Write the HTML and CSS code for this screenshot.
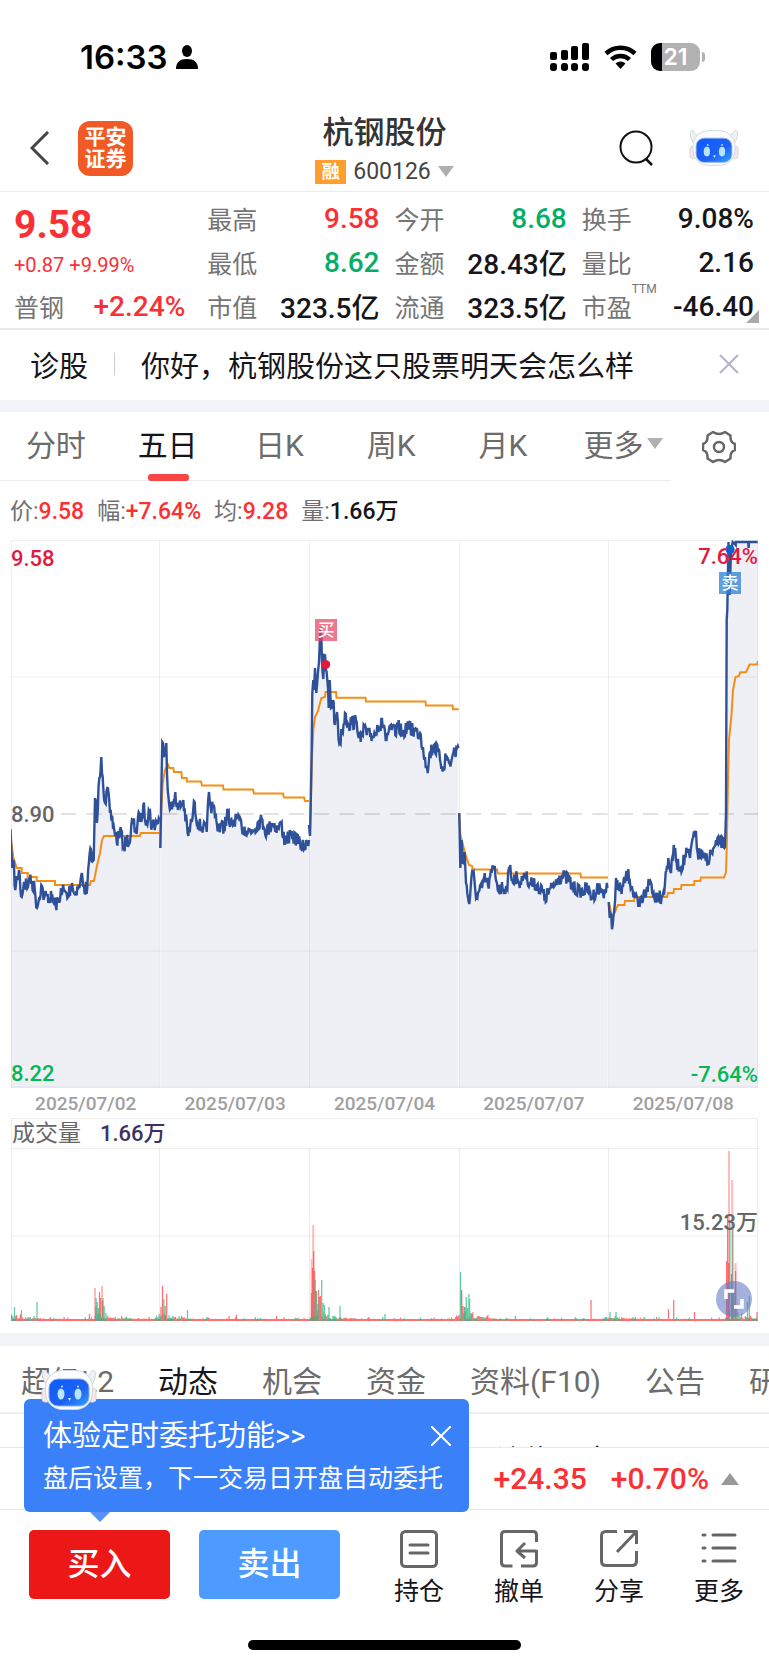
FILE: index.html
```html
<!DOCTYPE html>
<html lang="zh-CN">
<head>
<meta charset="utf-8">
<meta name="viewport" content="width=device-width, initial-scale=1">
<title>杭钢股份 600126</title>
<link rel="stylesheet" href="styles.css">
</head>
<body>
<svg class="defs" aria-hidden="true">
  <defs>
    <linearGradient id="face" x1="0" y1="0" x2="1" y2="1">
      <stop offset="0" stop-color="#0a5bff"/><stop offset=".6" stop-color="#1f62f2"/><stop offset="1" stop-color="#2fa4ff"/>
    </linearGradient>
    <symbol id="robot" viewBox="0 0 56 42">
      <path d="M7 18C2 12 0 4 3 1.500q2-1 3 2 2 4 9 4zM49 18c5-6 7-14 4-16.500q-2-1-3 2-2 4-9 4z" fill="#eef1f6" stroke="#cfd4dc"/>
      <rect x="1" y="19" width="8" height="14" rx="3" fill="#f7e6e4" stroke="#d4d6de"/>
      <rect x="47" y="19" width="8" height="14" rx="3" fill="#f7e6e4" stroke="#d4d6de"/>
      <rect x="4.500" y="1.500" width="47" height="39" rx="17" fill="#fbfcfe" stroke="#d2d6de"/>
      <rect x="8" y="10" width="40" height="27" rx="9" fill="url(#face)" stroke="#8fabe2"/>
      <ellipse cx="20" cy="25" rx="3.500" ry="5.500" fill="#b9e4ff"/><ellipse cx="37" cy="25" rx="3.500" ry="5.500" fill="#b9e4ff"/>
      <circle cx="21" cy="17.500" r="1" fill="#b9e4ff"/><circle cx="37" cy="17.500" r="1" fill="#b9e4ff"/>
      <path d="M27 29h3l-1.500 3z" fill="#d5efff"/>
    </symbol>
  </defs>
</svg>

<div class="status">
  <div class="status-left">
    <span>16:33</span>
    <svg width="22" height="25" viewBox="0 0 22 25"><ellipse cx="11" cy="6" rx="5" ry="6"/><path d="M0 24c0-7 4-10 11-10s11 3 11 10z"/></svg>
  </div>
  <div class="status-right">
    <svg width="40" height="28" viewBox="0 0 40 28">
      <rect x="0" y="9" width="7" height="8" rx="2"/><rect x="11" y="7" width="7" height="10" rx="2"/><rect x="21" y="3" width="7" height="14" rx="2"/><rect x="32" y="0" width="7" height="17" rx="2"/>
      <rect x="0" y="20" width="7" height="8" rx="3"/><rect x="11" y="20" width="7" height="8" rx="3"/><rect x="21" y="20" width="7" height="8" rx="3"/><rect x="32" y="20" width="7" height="8" rx="3"/>
    </svg>
    <svg width="33" height="26" viewBox="0 0 33 26">
      <path d="M2 9.500a21 21 0 0 1 29 0M7.500 15.500a13 13 0 0 1 18 0" fill="none" stroke="#000" stroke-width="4.500"/>
      <path d="M16.500 25l-5-5.500a7.500 7.500 0 0 1 10 0z"/>
    </svg>
    <div class="battery"><span>21</span></div>
  </div>
</div>

<header class="header">
  <div class="header-side">
    <button class="plain" aria-label="返回"><svg width="20" height="34" viewBox="0 0 20 34"><path d="M18 1L2 17l16 16" fill="none" stroke="#444" stroke-width="3"/></svg></button>
    <div class="logo"><span>平安</span><span>证券</span></div>
  </div>
  <div class="title">
    <h1>杭钢股份</h1>
    <button class="plain code"><span class="tag">融</span><span>600126</span><i class="tri-down"></i></button>
  </div>
  <div class="header-side end">
    <button class="plain" aria-label="搜索"><svg width="36" height="36" viewBox="0 0 36 36"><circle cx="17" cy="17" r="15.500" fill="none" stroke="#111" stroke-width="2"/><path d="M27 29l6 6" stroke="#111" stroke-width="2.500"/></svg></button>
    <button class="plain" aria-label="助手"><svg width="50" height="40"><use href="#robot"/></svg></button>
  </div>
</header>

<section class="quote">
  <div class="stat lead"><strong class="up big">9.58</strong></div>
  <div class="stat"><span>最高</span><b class="up">9.58</b></div>
  <div class="stat"><span>今开</span><b class="down">8.68</b></div>
  <div class="stat"><span>换手</span><b>9.08%</b></div>
  <div class="stat lead up small">+0.87 +9.99%</div>
  <div class="stat"><span>最低</span><b class="down">8.62</b></div>
  <div class="stat"><span>金额</span><b>28.43亿</b></div>
  <div class="stat"><span>量比</span><b>2.16</b></div>
  <div class="stat lead"><span>普钢</span><b class="up">+2.24%</b></div>
  <div class="stat"><span>市值</span><b>323.5亿</b></div>
  <div class="stat"><span>流通</span><b>323.5亿</b></div>
  <div class="stat"><span>市盈<sup>TTM</sup></span><b>-46.40</b></div>
  <i class="corner"></i>
</section>

<section class="ask">
  <span>诊股</span><i class="bar"></i><a href="#ask">你好，杭钢股份这只股票明天会怎么样</a>
  <button class="plain" aria-label="关闭"><svg width="20" height="20" viewBox="0 0 20 20"><path d="M1 1l18 18M19 1L1 19" stroke="#b4b4c6" stroke-width="2"/></svg></button>
</section>

<nav class="periods">
  <div class="period-list">
    <button class="plain">分时</button>
    <button class="plain active">五日</button>
    <button class="plain">日K</button>
    <button class="plain">周K</button>
    <button class="plain">月K</button>
    <button class="plain more">更多<i class="tri-down"></i></button>
  </div>
  <button class="plain gear" aria-label="设置"><svg width="34" height="34" viewBox="0 0 34 34" fill="none" stroke="#666" stroke-width="2.500" stroke-linejoin="round"><path d="M11 2q6 4 12 0l5.500 3.500q-.5 7 4.500 8.500v6q-5 1.500-4.500 8.500L23 32q-6-4-12 0l-5.500-3.500Q6 21.500 1 20v-6q5-1.500 4.500-8.500z"/><circle cx="17" cy="17" r="5"/></svg></button>
</nav>

<div class="readout">
  <span>价:<b class="up">9.58</b></span><span>幅:<b class="up">+7.64%</b></span><span>均:<b class="up">9.28</b></span><span>量:<b>1.66万</b></span>
</div>

<section class="chart">
  <div class="price">
    <svg id="price" viewBox="11 540 747 548" preserveAspectRatio="none">
      <path id="area" fill="#eef0f6"/>
      <path d="M11 540.500H758M11 677H758M11 951H758M11 1087H758M11.500 540V1088M159.500 540V1088M309.500 540V1088M459.500 540V1088M608.500 540V1088M757.500 540V1088" stroke="#000" stroke-opacity=".06" fill="none"/>
      <path d="M61 814H758" stroke="#000" stroke-opacity=".11" stroke-width="2" stroke-dasharray="15.300 10" fill="none"/>
      <path id="avg" fill="none" stroke="#f68d14" stroke-width="2"/>
      <path id="line" fill="none" stroke="#2f5199" stroke-width="2.400"/>
      <circle cx="325.700" cy="664.500" r="4.500" fill="#e3183e"/>
      <circle cx="730" cy="549.500" r="4.500" fill="#0a62d0"/>
    </svg>
    <span class="lab top-left">9.58</span>
    <span class="lab mid-left">8.90</span>
    <span class="lab bottom-left">8.22</span>
    <span class="lab top-right">7.64%</span>
    <span class="lab bottom-right">-7.64%</span>
    <span class="mark buy-mark">买</span>
    <span class="mark sell-mark">卖</span>
  </div>
  <div class="dates"><span>2025/07/02</span><span>2025/07/03</span><span>2025/07/04</span><span>2025/07/07</span><span>2025/07/08</span></div>
  <div class="vol-head"><span>成交量</span><b>1.66万</b></div>
  <div class="volume">
    <svg viewBox="11 1148 747 173" preserveAspectRatio="none">
      <path d="M11 1148.500H758M11 1236H758M11.500 1148V1321M159.500 1148V1321M309.500 1148V1321M459.500 1148V1321M608.500 1148V1321M757.500 1148V1321" stroke="#000" stroke-opacity=".07" fill="none"/>
      <path id="bars-up" fill="none" stroke="#ff4d50" stroke-opacity=".8" stroke-width="1.250"/>
      <path id="bars-down" fill="none" stroke="#2fb884" stroke-opacity=".75" stroke-width="1.250"/>
      <path id="bars-tall" fill="none" stroke="#ff4d50" stroke-opacity=".38" stroke-width="2"/>
    </svg>
    <span class="lab vol-lab">15.23万</span>
    <button class="expand" aria-label="全屏"><svg width="20" height="20" viewBox="0 0 20 20"><path d="M2 10V2h8M18 10v8h-8" fill="none" stroke="#fff" stroke-width="3.500"/></svg></button>
  </div>
</section>

<nav class="tabs">
  <a href="#l2">超级L2</a><a href="#news" class="active">动态</a><a href="#chance">机会</a><a href="#fund">资金</a><a href="#f10">资料(F10)</a><a href="#notice">公告</a><a href="#report">研报</a>
</nav>
<div class="news"><p>国&nbsp; 涨价&nbsp;百次</p></div>

<div class="bottom">
  <div class="index up"><span>3497.48</span><span>+24.35</span><span>+0.70%</span><i class="tri-up"></i></div>
  <div class="actions">
    <button class="trade buy">买入</button>
    <button class="trade sell">卖出</button>
    <div class="tools">
      <button class="plain tool"><svg width="38" height="38" viewBox="0 0 38 38"><rect x="1.500" y="1.500" width="35" height="35" rx="4"/><path d="M10 15h18M10 23h18" stroke-linecap="round"/></svg>持仓</button>
      <button class="plain tool"><svg width="38" height="38" viewBox="0 0 38 38"><path d="M36.500 12V5q0-3.500-3.500-3.500H5Q1.500 1.500 1.500 5v27.500Q1.500 36 5 36h7.500M21 36h12q3.500 0 3.500-3.500V21H18M25 13l-8 8 8 7"/></svg>撤单</button>
      <button class="plain tool"><svg width="38" height="38" viewBox="0 0 38 38"><path d="M17 1.500H6Q1.500 1.500 1.500 6v25q0 4.500 4.500 4.500h26q4.500 0 4.500-4.500V21M24 1.500h12.500V14M36 2L17 22"/></svg>分享</button>
      <button class="plain tool"><svg width="38" height="38" viewBox="0 0 38 38"><path d="M13 5h22M13 18h22M13 31h22M3 5h2M3 18h2M3 31h2" stroke-linecap="round"/></svg>更多</button>
    </div>
  </div>
  <div class="home"></div>
  <aside class="tip">
    <svg class="tip-robot" width="56" height="42"><use href="#robot"/></svg>
    <div class="tip-row"><a href="#timed">体验定时委托功能&gt;&gt;</a>
      <button class="plain" aria-label="关闭提示"><svg width="20" height="20" viewBox="0 0 20 20"><path d="M0 0l20 20M20 0L0 20" stroke="#fff" stroke-width="2"/></svg></button></div>
    <p>盘后设置，下一交易日开盘自动委托</p>
  </aside>
</div>
<script src="chart.js"></script>
</body>
</html>
```
FILE: styles.css
```css
* { box-sizing: border-box; }
body {
  margin: 0;
  background: #fff;
  color: #16161a;
  font-family: Roboto, "Noto Sans CJK SC", sans-serif;
  font-size: 25px;
  display: flex;
  flex-direction: column;
  overflow-x: hidden;
}
h1, p { margin: 0; }
a { color: inherit; text-decoration: none; white-space: nowrap; }
b { font-weight: 500; }
svg { display: block; }
.defs { position: absolute; width: 0; height: 0; }
.plain {
  border: 0; padding: 0; background: none;
  font: inherit; color: inherit; white-space: nowrap;
}
.up { color: #fb3034; }
.down { color: #06ad66; }
.tri-down { border: 8px solid transparent; border-top: 11px solid #b0b0b0; border-bottom: 0; }
.tri-up { border: 9px solid transparent; border-bottom: 12px solid #999; border-top: 0; }

.status {
  height: 112px; padding: 2px 64px 0 80px;
  display: flex; justify-content: space-between; align-items: center;
}
.status-left {
  display: flex; align-items: center; gap: 8px;
  font: 600 33px/40px Inter, sans-serif; color: #000;
}
.status-right { display: flex; align-items: center; gap: 14px; }
.battery {
  position: relative; width: 49px; height: 28px; margin-right: 5px; border-radius: 9px;
  background: linear-gradient(90deg, #000 11px, #b2b2b2 11px);
  color: #fff; font: 600 23px/28px Inter, sans-serif; text-align: center;
}
.battery::after {
  content: ""; position: absolute; right: -5px; top: 9px;
  width: 3px; height: 10px; border-radius: 0 4px 4px 0; background: #b2b2b2;
}

.header {
  height: 80px; padding: 0 30px; border-bottom: 1px solid #ececef;
  display: grid; grid-template-columns: 1fr auto 1fr; align-items: center;
}
.header-side { display: flex; align-items: center; gap: 28px; padding-bottom: 7px; }
.header-side.end { justify-content: flex-end; gap: 34px; }
.logo {
  width: 55px; height: 55px; border-radius: 12px; background: #f15a24; color: #fff;
  display: flex; flex-direction: column; justify-content: center;
  font-size: 21px; line-height: 22px; font-weight: 700; text-align: center;
}
.title { display: flex; flex-direction: column; align-items: center; gap: 7px; padding-bottom: 5px; }
.title h1 { font-size: 31px; line-height: 38px; font-weight: 500; color: #333; }
.code { display: flex; align-items: center; gap: 7px; font-size: 23px; line-height: 26px; color: #444; }
.tag { width: 31px; background: #ff9e2c; color: #fff; font-size: 18px; line-height: 24px; font-weight: 700; }

.quote {
  position: relative; padding: 4px 15px 0 14px; border-bottom: 2px solid #e7e7ee;
  display: grid; grid-template-columns: 178fr 172fr 172fr 172fr; column-gap: 15px;
  grid-auto-rows: 44px;
}
.stat { display: flex; justify-content: space-between; align-items: center; white-space: nowrap; }
.stat span { color: #757575; position: relative; }
.stat b { font-size: 28px; }
.lead { padding-right: 7px; }
.stat .big { font-size: 39px; font-weight: 700; padding-top: 14px; }
.small { font-size: 20px; padding-top: 6px; }
.stat sup { position: absolute; left: 100%; top: -6px; font-size: 12px; line-height: 14px; }
.corner { position: absolute; right: 10px; bottom: 5px; border-left: 13px solid transparent; border-bottom: 13px solid #aaa; }

.ask {
  height: 82px; padding: 0 30px 2px 30px; border-bottom: 12px solid #f2f3f9;
  display: flex; align-items: center; font-size: 29px;
}
.ask .bar { width: 1px; height: 22px; background: #ccc; margin: 0 26px; }
.ask button { margin-left: auto; }

.periods { display: flex; justify-content: space-between; height: 69px; }
.period-list {
  width: 87.2%; border-bottom: 1px solid #ececee;
  display: grid; grid-template-columns: repeat(6, 1fr); font-size: 30px; color: #6c6c6c;
}
.period-list button { padding-bottom: 6px; }
.period-list .active { color: #16161a; position: relative; }
.active::after {
  position: absolute; left: 50%; bottom: -1px; width: 41px; height: 7px; margin-left: -20px;
  border-radius: 3px; background: #f84646;
}
.period-list .active::after { content: ""; }
.more { display: flex; align-items: center; justify-content: flex-end; gap: 3px; padding-right: 8px; }
.gear { padding-right: 33px; }

.readout {
  padding: 14px 10px 0; height: 59px; line-height: 34px;
  display: flex; gap: 13px; font-size: 23px; color: #707070;
}
.readout > span { white-space: nowrap; }
.readout b { color: #16161a; }
.readout b.up { color: #fb3034; }

.chart { padding: 0 11px 12px 11px; border-bottom: 13px solid #f2f3f9; }
.price, .volume { position: relative; }
.price svg, .volume > svg { width: 100%; }
#price { height: 548px; }
.volume > svg { height: 173px; }
.lab { position: absolute; font-size: 22px; line-height: 26px; font-weight: 500; color: #666; }
.top-left { left: 0; top: 6px; color: #e3183e; }
.mid-left { left: 0; top: 50%; margin-top: -12px; }
.bottom-left { left: 0; bottom: 1px; color: #05b855; }
.top-right { right: 0; top: 4px; color: #e3183e; }
.bottom-right { right: 0; bottom: 0; color: #05b855; }
.mark { position: absolute; width: 22px; height: 22px; font-size: 17px; line-height: 22px; font-weight: 500; text-align: center; color: #fff; }
.buy-mark { left: 304px; top: 79px; background: rgba(231, 68, 100, .72); }
.sell-mark { right: 17px; top: 32px; background: rgba(50, 133, 214, .78); }
.dates {
  display: grid; grid-template-columns: repeat(5, 1fr); height: 30px; line-height: 32px;
  font-size: 19px; font-weight: 500; text-align: center; color: #a0a0a0;
}
.vol-head {
  height: 30px; border: 1px solid #eee; border-bottom: 0;
  display: flex; align-items: center; gap: 19px; font-size: 23px; line-height: 28px; color: #666;
}
.vol-head b { font-size: 22px; color: #3c3166; }
.vol-lab { right: 0; top: 62px; }
.expand {
  position: absolute; right: 6px; bottom: 4px; width: 36px; height: 36px; padding: 8px;
  border: 0; border-radius: 50%; background: rgba(97, 123, 196, .58);
}

.tabs {
  height: 68px; padding: 0 21px; border-bottom: 2px solid #efeff2;
  display: flex; align-items: center; gap: 44px; overflow: hidden;
  font-size: 30px; color: #6c6c6c;
}
.tabs .active { color: #16161a; }
.news { height: 33px; padding: 28px 0 0 456px; overflow: hidden; font-size: 27px; line-height: 36px; white-space: nowrap; }

.bottom { position: relative; }
.index {
  height: 63px; padding-right: 30px; border: 1px solid #eaeaec; border-width: 1px 0;
  display: flex; align-items: center; justify-content: flex-end; gap: 24px;
  font-size: 30px; font-weight: 500;
}
.index i { margin-left: -12px; }
.actions { padding: 20px 0 0 29px; display: flex; align-items: flex-start; }
.trade {
  flex: 0 1 141px; height: 69px; margin-right: 29px; padding: 0; border: 0; border-radius: 5px;
  color: #fff; font: 500 32px/69px Roboto, "Noto Sans CJK SC", sans-serif;
}
.buy { background: #ec1717; }
.sell { background: #4e9bff; }
.tools { flex: 1; display: grid; grid-template-columns: repeat(4, 1fr); }
.tool { display: flex; flex-direction: column; align-items: center; gap: 6px; font-size: 25px; line-height: 36px; }
.tool svg { fill: none; stroke: #666; stroke-width: 3; stroke-linejoin: round; }
.home { width: 273px; height: 10px; margin: 30px auto 15px; border-radius: 5px; background: #000; }

.tip {
  position: absolute; left: 24px; top: -48px; width: 445px; height: 113px; padding: 18px 18px 0 19px;
  border-radius: 6px; background: #3a80f8; color: #fff;
}
.tip::after { content: ""; position: absolute; left: 66px; top: 100%; border: 10px solid transparent; border-top-color: #5591f9; border-bottom: 0; }
.tip-robot { position: absolute; left: 17px; top: -30px; }
.tip-row { display: flex; justify-content: space-between; align-items: center; font-size: 29px; line-height: 38px; }
.tip p { font-size: 25px; line-height: 36px; padding-top: 6px; white-space: nowrap; }
```
FILE: chart.js
```js
// Five sessions of minute prices as turning points: x, y pairs.
var days = [
  [10.5,829,11.5,853,12.3,868,13.3,860,15.3,890,19,870,21.7,897,24,882,28,887,29,878,34.7,888,37,908,41.3,885,44.3,897,51.7,897,55.7,905,60,900,61,888,68,897,72,883,74,893,80,885,82,873,83.3,887,87.3,888,89.7,853,93.7,860,95,798,97,823,99.3,778,101.3,757,102.7,777,105,803,107.3,788,110,813,114.3,830,116.7,842,120,830,124,848,126,840,130,842,132.7,820,136.7,833,139.3,813,141.3,822,143.3,805,146.7,823,148.7,810,152,827,156.7,822,159.3,820],
  [160.3,848,162.3,742,164,757,166.3,743,167.7,790,170.7,808,173.3,807,175.3,792,178,810,183.3,800,188.3,836,191.7,822,194.7,802,197.3,823,203.3,827,206.7,832,209,792,210.7,807,213,808,217,825,224,828,228,812,230,827,237,818,241.7,827,250.7,832,261.7,820,266.7,833,271.7,823,278,828,281,823,283,838,293,837,300,843,304.7,848,306,840,309,840],
  [309,825,310,836,311.7,748,312.3,693,313.3,680,314,690,315,668,316.3,693,318,672,319,662,320.7,627,322,662,323.3,679,324.3,655,327.3,680,328.7,708,329.7,680,331,708,333,700,335,725,337,712,339.3,744,342,732,345,713,348,724,356.7,722,360.7,742,365,725,366.7,735,375,735,377.3,725,384,725,385.7,740,388,734,391.7,730,393.3,725,396,736,398,725,403,733,407,727,415,730,420,733,423,747,425,757,427.7,773,429.3,755,434,745,438,752,440,760,443.3,767,446,757,449,763,452,758,457,748,458.5,748],
  [459.3,813,460.3,868,461.7,840,463,863,464.7,852,466,883,469.3,904,470.7,887,473,873,476.7,897,482,888,484,878,488,885,491.7,873,494,868,497,883,500,888,506.7,888,510.3,865,513,883,517,876,521,885,524,873,530,883,537,885,545,897,552,888,558,878,565,876,573,886,580,892,586,888,593,897,598,888,603,893,607.5,888],
  [608.7,902,609.7,918,612.7,925,614.3,910,616,878,618,890,623,887,627.7,873,632,887,638.3,907,643,900,647,887,650.7,882,653,895,661.7,897,665,883,668.3,858,671,873,673.7,845,676.7,863,680.7,868,687,852,690,858,691.7,843,696,832,697.7,853,703,858,708,860,711.7,853,716.7,845,720,840,725,847,726,813,726.7,620,727.3,610,728.5,542,729.7,595,731,550,732.7,542,735.7,545,735.7,542,748.3,542,748.6,548,749,542,757.7,542]
];
var averages = [
  [10.5,837,13.3,857,16.7,868,21.7,868,21.7,873,27.7,873,27.7,877,36.7,877,36.7,881,55,881,55,885,90,885,91,881,94,881,96.7,867,100,853,102,840,104,836,140,836,140.7,833,159.3,833],
  [160.3,848,161,815,162.7,783,165,770,168.3,765,169.3,768,173.3,768,174,772,181.3,772,182,778,186.7,778,187,781.5,201,781.5,202,785.5,223,785.5,223.5,789.5,253,789.5,254,793.5,283,793.5,284,797.5,304,797.5,305,801,309,801],
  [310,836,312,757,313.3,730,315,717,318,711,320,703,321.5,698,325,697,325.5,692,336,692,336.5,697.7,365.5,697.7,366,701.5,425.5,701.5,426,705.5,452.5,705.5,453,709.3,458.7,709.3],
  [459,813,460.5,835,465,853,468,862,469,865,472,866,473,869.5,497,869.5,498,873.5,580.5,873.5,581,877.5,608,877.5],
  [609,902,612,918,615,912,617,907,618,905,624.5,905,625,901,634,901,634.5,897,667,897,668,893,673.5,893,674,889,681,889,681.5,885,694,885,694.5,881,700.5,881,701,877.5,724,877.5,726,872,726.7,850,728,780,729,740,731.5,715,733,690,735.5,677,739,676,740,672.5,746,672,748,668,749.5,664.5,757,664.5,758,661]
];
var seed = 7;
function rnd() { seed = (seed * 16807) % 2147483647; return seed / 2147483647; }

// Adds one-tick (4 unit) flicker between neighbouring turning points.
function trace(p) {
  var d = 'M' + p[0] + ' ' + p[1];
  for (var i = 2; i < p.length; i += 2) {
    var x0 = p[i - 2], y0 = p[i - 1], x1 = p[i], y1 = p[i + 1];
    var n = Math.floor((x1 - x0) / 0.65);
    if (y1 > 560) {
      for (var k = 1; k < n; k++) {
        var y = y0 + (y1 - y0) * k / n + (Math.floor(rnd() * 4) - 1.5) * 4;
        d += 'L' + (x0 + (x1 - x0) * k / n).toFixed(1) + ' ' + y.toFixed(1);
      }
    }
    d += 'L' + x1 + ' ' + y1;
  }
  return d;
}
function plain(p) {
  var d = '';
  for (var i = 0; i < p.length; i += 2) d += (i ? 'L' : 'M') + p[i] + ' ' + p[i + 1];
  return d;
}
var line = '', area = '', avg = '';
days.forEach(function (p, i) {
  var t = trace(p);
  line += t;
  area += t + 'V1088H' + p[0] + 'Z';
  avg += plain(averages[i]);
});
function set(id, d) { document.getElementById(id).setAttribute('d', d); }
set('line', line);
set('area', area);
set('avg', avg);

// Volume: a low base plus the notable minutes.
var up = '', down = '', tall = '';
function bar(x, h) { return 'M' + x + ' 1321V' + (1321 - h); }
for (var x = 11.6; x < 758; x += 1.25) {
  var r = rnd(), near = [[12, 8], [101, 6], [164, 6], [320, 10], [465, 8], [612, 4], [735, 6]].reduce(function (s, c) {
    var dx = x - c[0];
    return s + (dx > -10 ? c[1] * Math.exp(-Math.abs(dx) / 14) : 0);
  }, 0);
  var h = 2 + near * rnd() + (rnd() > 0.8 ? 2 * rnd() : 0) + (rnd() > 0.985 ? 3 : 0);
  up += bar(x.toFixed(2), r > 0.5 ? h : 2);
  if (r <= 0.5 && h > 2.5) down += bar(x.toFixed(2), h);
}
[[89.5,7],[96,14],[99.5,29],[100.5,23],[102.5,20],[161,14],[162.5,35],[166.7,27],[236.5,6],[311.5,28],[312.5,53],[313.7,70],[314.6,50],[316,30],[318.5,31],[319.5,24],[320.5,25],[461.7,31],[463,15],[465,14],[591,21],[668.5,12],[673.7,21],[694.5,9],[726.6,60],[727.6,105],[728.7,58],[731.5,47],[733,30],[735.6,50],[757,9]].forEach(function (b) { up += bar(b[0], b[1]); });
[[14.5,14],[21.5,11],[37,19],[96,23],[97.3,19],[98.5,13],[103,23],[104.2,15],[106,8],[163.8,22],[165.2,15],[187.5,11],[315.2,41],[316.5,30],[318,17],[321.7,41],[323,18],[324.5,16],[329,14],[340,15],[385,7],[460.5,49],[461.2,30],[464.5,14],[466.3,24],[467.5,13],[468.9,27],[469.7,22],[471,8],[610,9],[616,9],[729.9,100],[732.8,92],[734.2,28],[737,12],[747.5,19],[749.3,25]].forEach(function (b) { down += bar(b[0], b[1]); });
[[95,33],[102,35],[311.7,62],[313.2,96],[729,170],[732.2,141],[735.6,58]].forEach(function (b) { tall += bar(b[0], b[1]); });
set('bars-up', up);
set('bars-down', down);
set('bars-tall', tall);
```
